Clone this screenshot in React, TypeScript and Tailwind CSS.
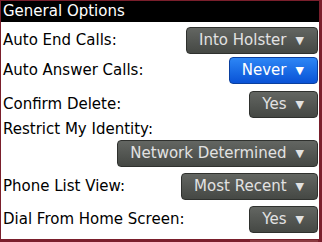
import { ReactNode } from "react";

const font = { fontFamily: '"DejaVu Sans", "Liberation Sans", sans-serif' };

function Choice({ label, blue = false }: { label: string; blue?: boolean }) {
  return (
    <div
      className={
        "h-[27px] flex items-center gap-[9px] pl-[12px] pr-[13px] rounded-[4px] border text-[15px] leading-none " +
        (blue
          ? "bg-gradient-to-b from-[#2d86f5] to-[#0a52d6] border-[#0a3f9e] text-white"
          : "bg-gradient-to-b from-[#636662] to-[#454844] border-[#2f312e] text-[#e2e2e2]")
      }
    >
      <span>{label}</span>
      <span className="text-[11px]">▼</span>
    </div>
  );
}

function Row({ label, children, className = "" }: { label: string; children: ReactNode; className?: string }) {
  return (
    <div className={"flex items-center justify-between " + className}>
      <span className="text-[15px] text-black leading-none">{label}</span>
      {children}
    </div>
  );
}

export default function App() {
  return (
    <div
      style={font}
      className="w-[322px] h-[242px] overflow-hidden bg-white border-t border-l border-r-[3px] border-[#7a1f2c] relative"
    >
      <div className="h-[21px] bg-black text-white text-[15px] leading-none flex items-center pl-[2px]">
        General Options
      </div>
      <div className="pl-[2px] pr-px flex flex-col">
        <Row label="Auto End Calls:" className="mt-[5px]">
          <Choice label="Into Holster" />
        </Row>
        <Row label="Auto Answer Calls:" className="mt-[3px]">
          <Choice label="Never" blue />
        </Row>
        <Row label="Confirm Delete:" className="mt-[7px]">
          <Choice label="Yes" />
        </Row>
        <div className="h-[20px] flex items-center mt-[1px] text-[15px] leading-none">Restrict My Identity:</div>
        <div className="flex justify-end mt-[1px]">
          <Choice label="Network Determined" />
        </div>
        <Row label="Phone List View:" className="mt-[6px]">
          <Choice label="Most Recent" />
        </Row>
        <Row label="Dial From Home Screen:" className="mt-[6px]">
          <Choice label="Yes" />
        </Row>
      </div>
      <div className="absolute left-0 right-0 bottom-0 h-[3px] bg-[#7a1f2c]" />
      <div className="absolute right-[1px] bottom-0 w-[68px] h-[2px] bg-[#8a3a40]" />
    </div>
  );
}
